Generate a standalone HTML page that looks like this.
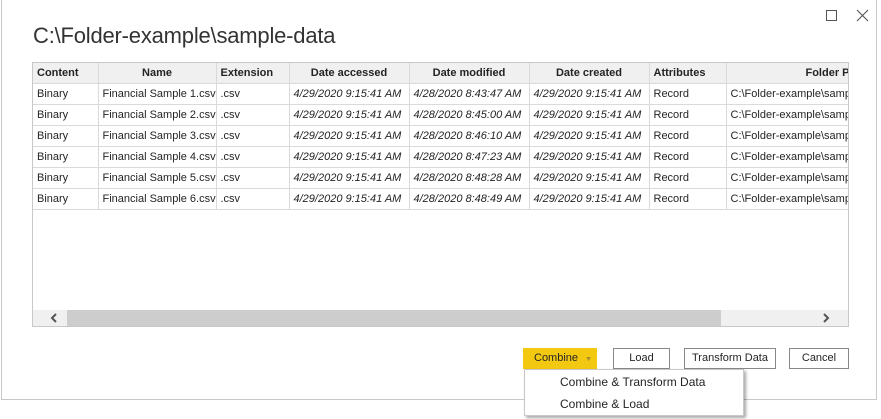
<!DOCTYPE html>
<html><head><style>
body{margin:0;width:881px;height:419px;background:#fff;font-family:"Liberation Sans",sans-serif;position:relative;overflow:hidden;color:#252423}
.dlg{position:absolute;left:1px;top:0;width:876px;height:400px;border:1px solid #c8c8c8;border-top:none;box-sizing:border-box}
.title{position:absolute;left:33px;top:23px;font-size:22px;color:#333;letter-spacing:-0.2px}
.tbl{position:absolute;left:32px;top:62px;width:817px;height:265px;border:1px solid #c8c8c8;box-sizing:border-box;overflow:hidden}
table{border-collapse:collapse;font-size:11px;position:absolute;left:0;top:0;table-layout:fixed;width:817px}
td,th{border:1px solid #dadada;height:20px;padding:0 4px;white-space:nowrap;overflow:hidden}
th{background:#f0f0f0;font-weight:bold;text-align:center;height:20px}
tr td:first-child,tr th:first-child{border-left:none}
tr:first-child th{border-top:none}
i{font-style:italic}
.sb{position:absolute;left:0;bottom:0;width:815px;height:16px;background:#f0f0f0}
.thumb{position:absolute;left:34px;top:0;width:654px;height:16px;background:#cdcdcd}
.btn{position:absolute;top:348px;height:21px;border:1px solid #8a8886;box-sizing:border-box;font-size:11px;text-align:center;line-height:19px;background:#fff}
.menu{position:absolute;left:524px;top:369px;width:220px;height:47px;background:#fff;border:1px solid #c8c8c8;box-sizing:border-box;box-shadow:2px 2px 3px rgba(0,0,0,.35);font-size:12px}
.menu div{position:absolute;left:35px}
</style></head><body>
<div class="dlg"></div>
<div style="position:absolute;left:826px;top:10px;width:9px;height:9px;border:1px solid #555"></div>
<svg style="position:absolute;left:856px;top:9px" width="13" height="13"><path d="M1 1L12 12M12 1L1 12" stroke="#555" stroke-width="1.1"/></svg>
<div class="title">C:\Folder-example\sample-data</div>
<div class="tbl">
<table>
<colgroup><col style="width:65px"><col style="width:118px"><col style="width:73px"><col style="width:120px"><col style="width:120px"><col style="width:120px"><col style="width:77px"><col style="width:124px"></colgroup>
<tr><th style="text-align:left">Content</th><th>Name</th><th style="text-align:left">Extension</th><th>Date accessed</th><th>Date modified</th><th>Date created</th><th style="text-align:left">Attributes</th><th style="text-align:right;padding-right:0">Folder P</th></tr>
<tr><td>Binary</td><td>Financial Sample 1.csv</td><td>.csv</td><td><i>4/29/2020 9:15:41 AM</i></td><td><i>4/28/2020 8:43:47 AM</i></td><td><i>4/29/2020 9:15:41 AM</i></td><td>Record</td><td>C:\Folder-example\samp</td></tr>
<tr><td>Binary</td><td>Financial Sample 2.csv</td><td>.csv</td><td><i>4/29/2020 9:15:41 AM</i></td><td><i>4/28/2020 8:45:00 AM</i></td><td><i>4/29/2020 9:15:41 AM</i></td><td>Record</td><td>C:\Folder-example\samp</td></tr>
<tr><td>Binary</td><td>Financial Sample 3.csv</td><td>.csv</td><td><i>4/29/2020 9:15:41 AM</i></td><td><i>4/28/2020 8:46:10 AM</i></td><td><i>4/29/2020 9:15:41 AM</i></td><td>Record</td><td>C:\Folder-example\samp</td></tr>
<tr><td>Binary</td><td>Financial Sample 4.csv</td><td>.csv</td><td><i>4/29/2020 9:15:41 AM</i></td><td><i>4/28/2020 8:47:23 AM</i></td><td><i>4/29/2020 9:15:41 AM</i></td><td>Record</td><td>C:\Folder-example\samp</td></tr>
<tr><td>Binary</td><td>Financial Sample 5.csv</td><td>.csv</td><td><i>4/29/2020 9:15:41 AM</i></td><td><i>4/28/2020 8:48:28 AM</i></td><td><i>4/29/2020 9:15:41 AM</i></td><td>Record</td><td>C:\Folder-example\samp</td></tr>
<tr><td>Binary</td><td>Financial Sample 6.csv</td><td>.csv</td><td><i>4/29/2020 9:15:41 AM</i></td><td><i>4/28/2020 8:48:49 AM</i></td><td><i>4/29/2020 9:15:41 AM</i></td><td>Record</td><td>C:\Folder-example\samp</td></tr>
</table>
<div class="sb"><div class="thumb"></div>
<svg style="position:absolute;left:17px;top:3px" width="8" height="10"><path d="M6 1L2 5L6 9" stroke="#555" stroke-width="2" fill="none"/></svg>
<svg style="position:absolute;left:789px;top:3px" width="8" height="10"><path d="M2 1L6 5L2 9" stroke="#555" stroke-width="2" fill="none"/></svg>
</div>
</div>
<div class="btn" style="left:523px;width:74px;background:#f2c811;border-color:#f2c811;text-align:left;padding-left:10px">Combine <span style="color:#a08a30;font-size:7px;margin-left:4px">▼</span></div>
<div class="btn" style="left:613px;width:57px">Load</div>
<div class="btn" style="left:684px;width:92px">Transform Data</div>
<div class="btn" style="left:789px;width:60px">Cancel</div>
<div class="menu"><div style="top:5px">Combine &amp; Transform Data</div><div style="top:27px">Combine &amp; Load</div></div>
</body></html>
